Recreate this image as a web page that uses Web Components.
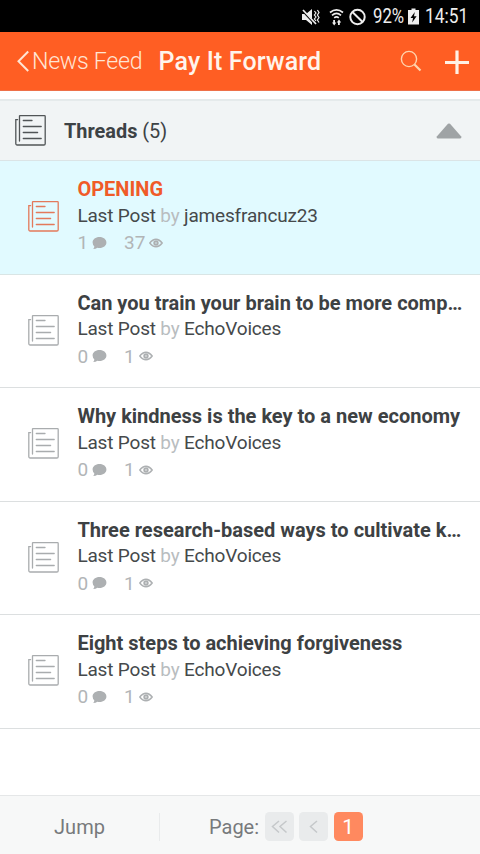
<!DOCTYPE html>
<html lang="en"><head><meta charset="utf-8"><title>Pay It Forward</title>
<style>
html,body{margin:0;height:100%;background:#fff;overflow:hidden}
body{font-family:Roboto,sans-serif;color:#3d4245}
</style></head><body>
<forum-app></forum-app>
<script>
const define=(name,html,after)=>customElements.define(name,class extends HTMLElement{
  constructor(){super();this.attachShadow({mode:'open'}).innerHTML=html;}
  connectedCallback(){if(after)after(this,this.shadowRoot);}
});

define('thread-icon',`<style>:host{display:block;width:31px;height:31px;flex:none}svg{display:block}</style>
<svg width="31" height="31" viewBox="0 0 31 31" fill="none" stroke="currentColor" stroke-width="1.3" stroke-linecap="round">
<path d="M4.5 26V1.2Q4.5.7 5 .7H29.5Q30.2.7 30.2 1.4V28.7Q30.2 30 28.9 30H2.2Q.8 30 .8 28.6V4.6H2.6"/>
<path d="M8.3 5.5H17M8.3 11.5H26.2M8.3 17.5H22.6M8.3 23.5H26.2"/></svg>`);

define('status-bar',`<style>
:host{display:flex;height:32px;background:#000;color:#eee;align-items:center;justify-content:flex-end;padding:1px 12px 0 0;box-sizing:border-box;font-size:19.5px}
svg{display:block;flex:none}.w{margin-left:9px}.n{margin-left:5px}.p{margin-left:7px}.b{margin-left:3px}.t{margin-left:6px}
span{display:block;white-space:nowrap}.p{width:32px}i{font-style:normal;display:inline-block;transform-origin:left}.p i{transform:scaleX(.86)}.t{width:43px}.t i{transform:scaleX(.89)}
</style>
<svg width="19" height="18" viewBox="0 0 19 18"><path fill="#eee" d="M1 6H5L11 1V17L5 12H1Z"/><path d="M1 2L14 16" stroke="#000" stroke-width="2"/><path d="M2 2L15 16" stroke="#eee" stroke-width="1.7"/><path d="M13.4 3L15 5L13.4 7L15 9L13.4 11L15 13M16.4 2L18 4.5L16.4 7L18 9.5L16.4 12L18 14.5" fill="none" stroke="#eee" stroke-width="1.2"/></svg>
<svg class="w" width="15" height="18" viewBox="0 0 15 18" fill="none" stroke="#eee" stroke-width="1.7"><path d="M1 4.5Q7.5-.8 14 4.5M3 7.3Q7.5 3.5 12 7.3M5.2 9.8Q7.5 8 9.8 9.8"/><path fill="#eee" stroke="none" d="M4.2 12H6V14.6H7.3L5.2 17.4L3 14.6H4.2ZM9 17V14.4H7.8L10 11.6L12.2 14.4H10.8V17Z"/></svg>
<svg class="n" width="17" height="18" viewBox="0 0 17 18" fill="none" stroke="#eee" stroke-width="2"><circle cx="8.5" cy="9" r="7.2"/><path d="M3.4 4L13.6 14"/></svg>
<span class="p"><i>92%</i></span>
<svg class="b" width="11" height="17" viewBox="0 0 11 17"><path fill="#eee" d="M3.5.5H7.5V2H11V16.5H0V2H3.5Z"/><path fill="#000" d="M6.8 4L2.5 10H5L4.2 14.5L8.6 8.2H6Z"/></svg>
<span class="t"><i>14:51</i></span>`);

define('nav-header',`<style>
:host{display:flex;align-items:center;height:59px;box-sizing:border-box;background:#ff5e23;border-bottom:1px solid #ee7049;color:#fff;padding:0 11.5px 1px 17px}
.back{display:flex;align-items:center;font-size:23.2px;font-weight:300;color:#ffe5d4;width:141.5px;white-space:nowrap}
.back b{font-weight:300;letter-spacing:-.3px;margin-left:3px}
h1{margin:0;padding-top:1px;font-size:25px;font-weight:500;white-space:nowrap;letter-spacing:.15px;flex:1;color:#fff4ec}
svg{flex:none;display:block}.back svg{position:relative;top:.5px}.add{margin-left:23px;margin-top:2px}
</style>
<div class="back"><svg width="12" height="22" viewBox="0 0 12 22" fill="none" stroke="currentColor" stroke-width="2"><path d="M11.2 1.5L1.5 11.3L11.2 21"/></svg><b><slot name="back"></slot></b></div>
<h1><slot></slot></h1>
<svg width="22" height="22" viewBox="0 0 22 22" fill="none" stroke="#ffd3ad" stroke-width="1.4"><circle cx="9" cy="9" r="7.6"/><path d="M14.5 14.5L20.5 20.5" stroke-width="2.2"/></svg>
<svg class="add" width="24" height="24" viewBox="0 0 24 24" stroke="#fff1e5" stroke-width="3.2"><path d="M12 .5V24M0 12.5H24"/></svg>`);

define('section-header',`<style>
:host{display:flex;align-items:center;height:62px;box-sizing:border-box;margin-top:8px;background:#f1f4f5;border-top:2px solid #e5eaeb;border-bottom:1px solid #dbe4e6;padding:0 18px 0 15px;font-size:19.9px}
div{flex:1;margin-left:18px;padding-top:1px}thread-icon{color:#515557}b{font-weight:700}
</style><thread-icon></thread-icon><div><b><slot></slot></b> <slot name="count"></slot></div>
<svg width="26" height="16" viewBox="0 0 26 16"><path fill="#9fa3a5" d="M12 .8Q13 0 14 .8L25 13.2Q26 15.4 24 15.5H2Q0 15.4 1 13.2Z"/></svg>`);

define('thread-row',`<style>
:host{display:flex;height:113.5px;box-sizing:border-box;border-bottom:1px solid #dcdfe0;padding:15px 16px 0 28.4px;font-size:19px;line-height:27px;color:#45494b}
:host([active]){background:#e1faff;border-color:#d9e5e5}
thread-icon{margin-top:25.4px;color:#a9acae}:host([active]) thread-icon{color:#e3795b}
.body{flex:1;min-width:0;margin-left:18px}
.title{font-weight:700;font-size:20px;line-height:26.5px;color:#3d4143;white-space:nowrap}:host([active]) .title{color:#f05b28}
.post{letter-spacing:-.18px;line-height:26.5px}
.by{color:#b9bdbf}.stats{display:flex;align-items:center;color:#b2b5b7;font-size:19px}
svg{margin-left:4px;display:block}.views{margin-left:17px}
</style><thread-icon></thread-icon><div class="body"><div class="title"><slot></slot></div>
<div class="post">Last Post <span class="by">by</span> <slot name="author"></slot></div>
<div class="stats"><slot name="replies"></slot><svg width="15" height="14" viewBox="0 0 15 14"><path fill="#adb0b2" d="M7.5 1C11.5 1 14.4 3.4 14.4 6.5S11.5 12 7.5 12Q6.5 12 5.4 11.8Q3.8 13 1.2 13Q2.4 12 2.3 10.3Q.6 8.8.6 6.5C.6 3.4 3.5 1 7.5 1Z"/></svg>
<span class="views"><slot name="views"></slot></span><svg width="14" height="10" viewBox="0 0 14 10" fill="none" stroke="#adb0b2" stroke-width="1.4"><path d="M.8 5Q3.6 1.2 7 1.2T13.2 5Q10.4 8.8 7 8.8T.8 5Z"/><circle cx="7" cy="5" r="1.7" stroke-width="2"/></svg></div></div>`);

define('page-button',`<style>:host{display:flex;width:29px;height:29px;border-radius:4.5px;background:#e9ebec;color:#c5c8ca;align-items:center;justify-content:center;font-size:21px;flex:none}
:host([current]){background:#ff895f;color:#fff}</style><slot></slot>`);

define('page-footer',`<style>
:host{display:flex;align-items:center;height:59px;box-sizing:border-box;margin-top:auto;background:#f7f8f8;border-top:1px solid #e5e7e8;font-size:20px;color:#777a7c;padding-top:3px}
.jump{width:159px;text-align:center;border-right:1px solid #e9ebec;height:28px;line-height:28px}
.pages{display:flex;align-items:center;gap:5.5px;margin-left:49px}
svg{display:block}
</style><div class="jump">Jump</div><div class="pages"><span>Page:</span>
<page-button><svg width="17" height="14" viewBox="0 0 17 14" fill="none" stroke="currentColor" stroke-width="1.5"><path d="M8 1L1.5 6.5L8 12.5M15.5 1L9 6.5L15.5 12.5"/></svg></page-button>
<page-button><svg width="9" height="14" viewBox="0 0 9 14" fill="none" stroke="currentColor" stroke-width="1.5"><path d="M8 1L1.5 6.5L8 12.5"/></svg></page-button>
<page-button current>1</page-button></div>`);

define('forum-app',`<style>:host{display:flex;flex-direction:column;height:100vh}main{display:block}</style>
<status-bar></status-bar><nav-header><span slot="back">News Feed</span>Pay It Forward</nav-header>
<section-header>Threads<span slot="count">(5)</span></section-header><main></main><page-footer></page-footer>`,(el,root)=>{
  const main=root.querySelector('main');
  [['OPENING','jamesfrancuz23',1,37],
   ['Can you train your brain to be more comp…','EchoVoices',0,1],
   ['Why kindness is the key to a new economy','EchoVoices',0,1],
   ['Three research-based ways to cultivate k…','EchoVoices',0,1],
   ['Eight steps to achieving forgiveness','EchoVoices',0,1]].forEach(([t,a,r,v],i)=>{
    const row=document.createElement('thread-row');
    if(!i)row.setAttribute('active','');
    row.innerHTML=`${t}<span slot="author">${a}</span><span slot="replies">${r}</span><span slot="views">${v}</span>`;
    main.append(row);
  });
});
</script></body></html>
